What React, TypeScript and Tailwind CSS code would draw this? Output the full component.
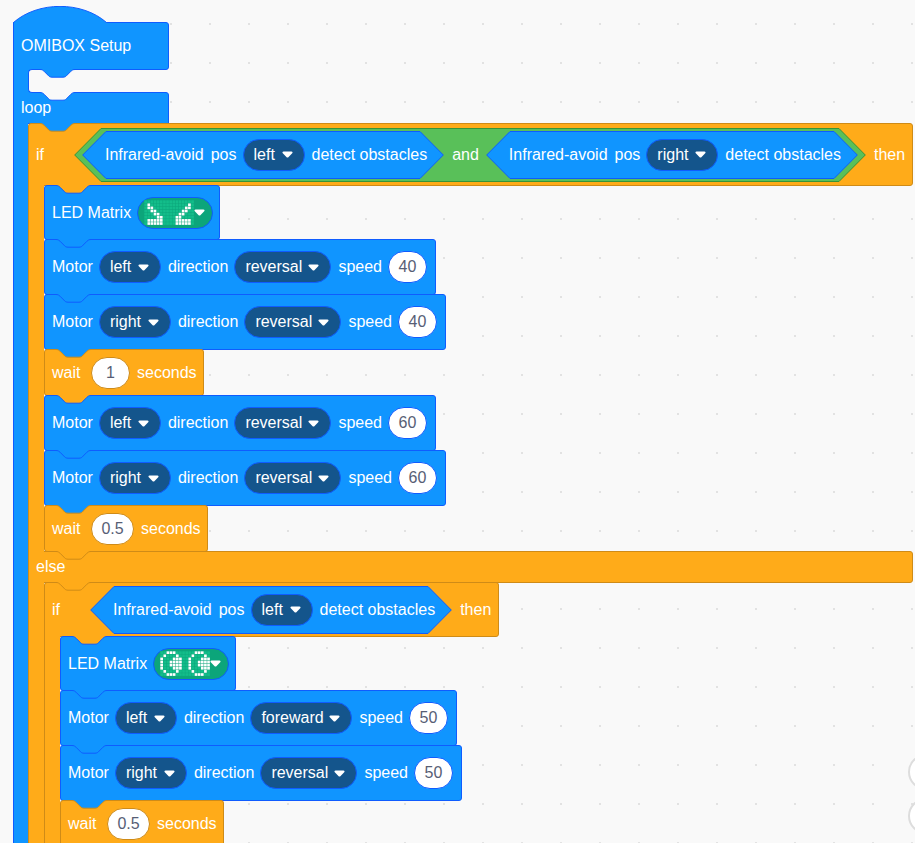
import type { ReactNode } from "react";

type Tone = "blue" | "orange";

const fillOf = { blue: "#1095ff", orange: "#ffab19", canvas: "#f9f9f9" };
const strokeOf = { blue: "#0f5cff", orange: "#cf8b17" };
const blockTone = {
  blue: "bg-[#1095ff] border-[#0f5cff]",
  orange: "bg-[#ffab19] border-[#cf8b17]",
};

function Notch({ above, tone, className = "left-[11px]" }: { above: keyof typeof fillOf; tone: Tone; className?: string }) {
  return (
    <svg className={`absolute -top-px ${className}`} width="36" height="9" viewBox="0 0 36 9" aria-hidden="true">
      <path
        d="M0 0V.5C2 .5 3 1.2 4 2.2L8 6.2C9 7.4 10 8.2 12 8.2H23C25 8.2 26 7.4 27 6.2L31 2.2C32 1.2 33 .5 35 .5V0Z"
        fill={fillOf[above]}
      />
      <path
        d="M0 .5C2 .5 3 1.2 4 2.2L8 6.2C9 7.4 10 8.2 12 8.2H23C25 8.2 26 7.4 27 6.2L31 2.2C32 1.2 33 .5 35 .5"
        fill="none"
        stroke={strokeOf[tone]}
      />
    </svg>
  );
}

function Arrow() {
  return (
    <svg width="11" height="7" viewBox="0 0 11 7" className="shrink-0" aria-hidden="true">
      <path d="M1.6.6H9.4C10.5.6 10.9 1.6 10.2 2.3L6.6 5.9C5.9 6.6 5.1 6.6 4.4 5.9L.8 2.3C.1 1.6.5.6 1.6.6Z" fill="#fff" />
    </svg>
  );
}

function Label({ children, className = "" }: { children: ReactNode; className?: string }) {
  return <span className={`whitespace-nowrap pl-px ${className}`}>{children}</span>;
}

const optionWidth: Record<string, string> = {
  left: "w-[62px]",
  right: "w-[72px]",
  reversal: "w-[97px]",
  foreward: "w-[102px]",
};

function Dropdown({ value, options, label }: { value: string; options: string[]; label: string }) {
  return (
    <span className={`relative flex h-8 shrink-0 items-center ${optionWidth[value]}`}>
      <select
        aria-label={label}
        defaultValue={value}
        className="h-8 w-full appearance-none rounded-full border border-[#0f5cff] bg-[#14558c] pl-[10px] text-base leading-5 text-white"
      >
        {options.map((o) => (
          <option key={o}>{o}</option>
        ))}
      </select>
      <span className="pointer-events-none absolute right-3">
        <Arrow />
      </span>
    </span>
  );
}

function NumberField({ value, label, tone }: { value: string; label: string; tone: Tone }) {
  return (
    <input
      type="text"
      aria-label={label}
      defaultValue={value}
      className={`h-8 shrink-0 rounded-full border bg-white text-center text-base text-[#575e75] ${
        value.length > 2 ? "w-[43px]" : "w-[39px]"
      } ${tone === "blue" ? "border-[#0f5cff]" : "border-[#cf8b17]"}`}
    />
  );
}

function Block({ tone, above, height, children }: { tone: Tone; above: keyof typeof fillOf; height: string; children: ReactNode }) {
  return (
    <div className={`relative -mb-px flex w-max items-center rounded-[3px] border ${blockTone[tone]} ${height}`}>
      <Notch above={above} tone={tone} />
      {children}
    </div>
  );
}

const sides = ["left", "right"];
const directions = ["foreward", "reversal"];

function Motor({ side, direction, speed, above = "blue" }: { side: string; direction: string; speed: string; above?: Tone }) {
  return (
    <Block tone="blue" above={above} height="h-14">
      <div className="flex items-center gap-[6px] pl-[6px] pr-2">
        <Label>Motor</Label>
        <Dropdown label="Motor side" value={side} options={sides} />
        <Label>direction</Label>
        <Dropdown label="Motor direction" value={direction} options={directions} />
        <Label>speed</Label>
        <NumberField label="Motor speed" value={speed} tone="blue" />
      </div>
    </Block>
  );
}

function Wait({ seconds }: { seconds: string }) {
  return (
    <Block tone="orange" above="blue" height="h-[47px]">
      <div className="flex items-center gap-[6px] pl-[6px] pr-[6px]">
        <Label className="w-[34px]">wait</Label>
        <NumberField label="Seconds to wait" value={seconds} tone="orange" />
        <Label>seconds</Label>
      </div>
    </Block>
  );
}

const sadEyes = [
  "................",
  ".#............#.",
  ".##..........##.",
  "..##........##..",
  "...##......##...",
  "....##....##....",
  ".#####....#####.",
  ".#####....#####.",
];

const roundEyes = [
  "..###......###..",
  ".#...#....#...#.",
  "#...###..#...###",
  "#..####..#..####",
  "#..####..#..####",
  "#...###..#...###",
  ".#...#....#...#.",
  "..###......###..",
];

function LedMatrix({ rows }: { rows: string[] }) {
  return (
    <Block tone="blue" above="orange" height="h-[55px]">
      <div className="flex items-center gap-[6px] px-[6px]">
        <Label>LED Matrix</Label>
        <button
          type="button"
          aria-label="LED pattern"
          className="flex h-8 w-[76px] items-center rounded-full border border-[#0f5cff] bg-[#0ca57a] pl-[6px]"
        >
          <svg width="50" height="25" viewBox="0 0 160 80" className="shrink-0" aria-hidden="true">
            <rect width="160" height="80" fill="#0ca57a" />
            {rows.map((row, y) =>
              row.split("").map((c, x) => (
                <rect key={`${x}-${y}`} x={x * 10 + 1} y={y * 10 + 1} width="8.6" height="8.6" fill={c === "#" ? "#fff" : "#13bd8a"} />
              )),
            )}
          </svg>
          <Arrow />
        </button>
      </div>
    </Block>
  );
}

function Hexagon({ color, children }: { color: "blue" | "green"; children: ReactNode }) {
  const blue = color === "blue";
  const fill = blue ? "#1095ff" : "#59c059";
  const stroke = blue ? "#0f5cff" : "#389438";
  const cap = blue ? "w-6" : "w-[27px]";
  const box = blue ? "0 0 24 48" : "0 0 27 54";
  const path = blue ? "M24 .5L.7 24L24 47.5" : "M27 .5L.7 27L27 53.5";
  return (
    <div className={`relative flex shrink-0 items-center ${blue ? "h-12" : "h-[54px]"}`}>
      <svg viewBox={box} className={`absolute left-0 top-0 h-full ${cap}`} aria-hidden="true">
        <path d={path} fill={fill} stroke={stroke} />
      </svg>
      <span className={`absolute inset-y-0 border-y ${blue ? "inset-x-6 border-[#0f5cff] bg-[#1095ff]" : "inset-x-[27px] border-[#389438] bg-[#59c059]"}`} />
      <svg viewBox={box} className={`absolute right-0 top-0 h-full -scale-x-100 ${cap}`} aria-hidden="true">
        <path d={path} fill={fill} stroke={stroke} />
      </svg>
      <div className={`relative flex items-center ${blue ? "gap-[6px] pl-[22px] pr-[17px]" : "gap-[7px] px-2"}`}>{children}</div>
    </div>
  );
}

function InfraredAvoid({ side }: { side: string }) {
  return (
    <Hexagon color="blue">
      <Label>Infrared-avoid</Label>
      <Label>pos</Label>
      <Dropdown label="Infrared sensor position" value={side} options={sides} />
      <Label>detect obstacles</Label>
    </Hexagon>
  );
}

function Branch({ tone, spine, children }: { tone: Tone; spine: string; children: ReactNode }) {
  return (
    <div className="flex">
      <div className={`relative z-10 -mb-px shrink-0 border-l ${blockTone[tone]} ${spine}`} />
      <div className="flex flex-col">{children}</div>
    </div>
  );
}

function IfHeader({ above, height, children }: { above: Tone; height: string; children: ReactNode }) {
  return (
    <div className={`relative -mb-px flex items-center gap-[7px] rounded-[3px] rounded-bl-none border pl-[6px] pr-[7px] ${blockTone.orange} ${height}`}>
      <Notch above={above} tone="orange" />
      <Label className="w-8">if</Label>
      {children}
      <Label>then</Label>
    </div>
  );
}

function InnerIf() {
  return (
    <div className="relative flex w-max flex-col">
      <IfHeader above="orange" height="h-[55px]">
        <InfraredAvoid side="left" />
      </IfHeader>
      <Branch tone="orange" spine="w-4">
        <LedMatrix rows={roundEyes} />
        <Motor side="left" direction="foreward" speed="50" />
        <Motor side="right" direction="reversal" speed="50" />
        <Wait seconds="0.5" />
      </Branch>
    </div>
  );
}

function OuterIf() {
  return (
    <div className="relative flex w-max flex-col">
      <IfHeader above="blue" height="h-[63px]">
        <Hexagon color="green">
          <InfraredAvoid side="left" />
          <Label>and</Label>
          <InfraredAvoid side="right" />
        </Hexagon>
      </IfHeader>
      <Branch tone="orange" spine="w-4">
        <LedMatrix rows={sadEyes} />
        <Motor side="left" direction="reversal" speed="40" />
        <Motor side="right" direction="reversal" speed="40" />
        <Wait seconds="1" />
        <Motor side="left" direction="reversal" speed="60" above="orange" />
        <Motor side="right" direction="reversal" speed="60" />
        <Wait seconds="0.5" />
      </Branch>
      <div className={`relative -mb-px flex h-8 items-center rounded-r-[3px] border pl-[6px] ${blockTone.orange}`}>
        <Notch above="orange" tone="orange" className="left-[27px]" />
        <Label className="relative">else</Label>
      </div>
      <Branch tone="orange" spine="w-4">
        <InnerIf />
      </Branch>
    </div>
  );
}

function SetupHat() {
  return (
    <div className="flex w-max flex-col">
      <svg width="94" height="17" viewBox="0 0 94 17" className="relative z-10 -mb-px" aria-hidden="true">
        <path d="M.5 17V16.5C25-5 69-5 93.5 16.5V17Z" fill="#1095ff" />
        <path d="M.5 17V16.5C25-5 69-5 93.5 16.5" fill="none" stroke="#0f5cff" />
      </svg>
      <div className={`-mb-px flex h-12 w-[156px] items-center rounded-[3px] rounded-l-none border pl-[6px] ${blockTone.blue}`}>
        <Label>OMIBOX Setup</Label>
      </div>
      <div className="flex h-[23px]">
        <div className={`relative z-10 -mb-px w-[15px] shrink-0 border-l ${blockTone.blue}`} />
        <div className="relative z-10 -mb-px w-[15px] bg-[#1095ff]">
          <div className="h-full rounded-l-[4px] border border-r-0 border-[#0f5cff] bg-[#f9f9f9]" />
        </div>
        <div className="relative z-10 h-px w-0">
          <Notch above="blue" tone="blue" className="-left-[3px] top-0" />
        </div>
      </div>
      <div className={`relative -mb-px flex h-8 w-[156px] items-center rounded-tr-[3px] border pl-[6px] ${blockTone.blue}`}>
        <Notch above="canvas" tone="blue" className="left-[26px] z-20" />
        <Label>loop</Label>
      </div>
      <Branch tone="blue" spine="w-[15px]">
        <OuterIf />
      </Branch>
    </div>
  );
}

export default function App() {
  return (
    <main className="relative h-screen overflow-hidden bg-[#f9f9f9] bg-[radial-gradient(circle_at_1px_1px,#e2e2e2_1px,transparent_1px)] bg-[length:39px_39px] bg-[position:14px_23px] pl-[13px] pt-[6px] font-['Liberation_Sans',Arial,sans-serif] text-base leading-5 text-white">
      <SetupHat />
      <div className="absolute -right-[29px] bottom-[9px] flex flex-col gap-2">
        <button type="button" aria-label="Zoom in" className="size-9 rounded-full border-2 border-[#dddddd] bg-white" />
        <button type="button" aria-label="Zoom out" className="size-9 rounded-full border-2 border-[#dddddd] bg-white" />
      </div>
    </main>
  );
}
